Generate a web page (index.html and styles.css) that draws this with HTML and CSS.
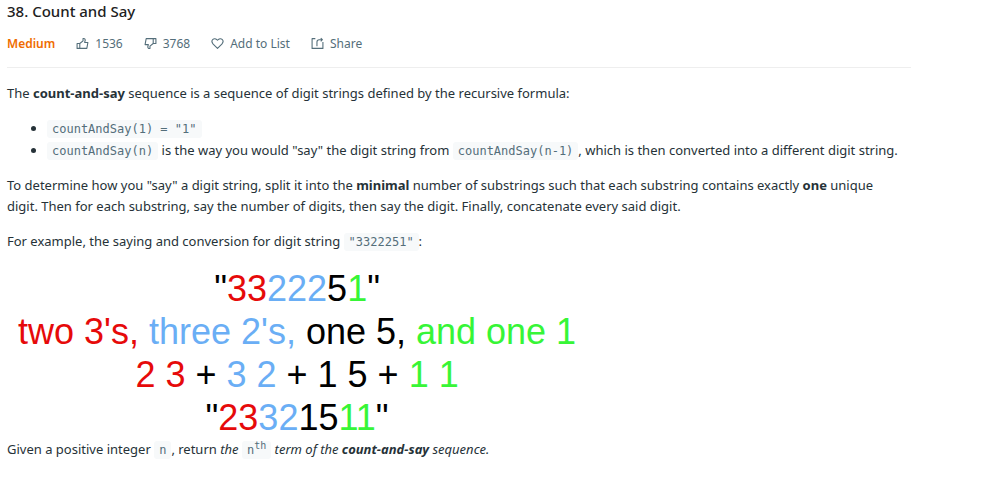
FILE: index.html
```html
<!DOCTYPE html>
<html lang="en">
<head>
<meta charset="utf-8">
<meta name="viewport" content="width=device-width, initial-scale=1">
<title>Count and Say</title>
<link rel="stylesheet" href="styles.css">
</head>
<body>
<main class="problem">
  <header class="head">
    <h1 class="title">38. Count and Say</h1>
    <div class="meta">
      <span class="difficulty">Medium</span>
      <button class="action" type="button"><svg class="icon" viewBox="0 0 24 24" aria-hidden="true"><path d="M2 12h5v9H2zM7 12l6-5V3c3-1 4 1 4 3l-1 4h6l-2 11H7"/></svg>1536</button>
      <button class="action" type="button"><svg class="icon" viewBox="0 0 24 24" aria-hidden="true"><path d="M22 12h-5V3h5zM17 12l-6 5v4c-3 1-4-1-4-3l1-4H2L4 3h13"/></svg>3768</button>
      <button class="action" type="button"><svg class="icon" viewBox="0 0 24 24" aria-hidden="true"><path d="M12 21 4 13C-2 6 6-1 12 6c6-7 14 0 8 7z"/></svg>Add to List</button>
      <button class="action" type="button"><svg class="icon" viewBox="0 0 24 24" aria-hidden="true"><path d="M8 3H2v18h20V9M11 17V9c0-3 1-4 4-4h6M18 2l3 3-3 3"/></svg>Share</button>
    </div>
  </header>
  <div class="content">
    <p>The <strong>count-and-say</strong> sequence is a sequence of digit strings defined by the recursive formula:</p>
    <ul>
      <li><code>countAndSay(1) = "1"</code></li>
      <li><code>countAndSay(n)</code> is the way you would "say" the digit string from <code>countAndSay(n-1)</code>, which is then converted into a different digit string.</li>
    </ul>
    <p>To determine how you "say" a digit string, split it into the <strong>minimal</strong> number of substrings such that each substring contains exactly <strong>one</strong> unique digit. Then for each substring, say the number of digits, then say the digit. Finally, concatenate every said digit.</p>
    <p>For example, the saying and conversion for digit string <code>"3322251"</code>:</p>
    <figure class="figure">
      <div>"<span class="red">33</span><span class="blue">222</span>5<span class="green">1</span>"</div>
      <div><span class="red">two 3's,</span> <span class="blue">three 2's,</span> one 5, <span class="green">and one 1</span></div>
      <div><span class="red">2 3</span> + <span class="blue">3 2</span> + 1 5 + <span class="green">1 1</span></div>
      <div>"<span class="red">23</span><span class="blue">32</span>15<span class="green">11</span>"</div>
    </figure>
    <p>Given a positive integer <code>n</code>, return <em>the <code>n<sup>th</sup></code> term of the <strong>count-and-say</strong> sequence.</em></p>
  </div>
</main>
</body>
</html>
```
FILE: styles.css
```css
* { box-sizing: border-box; }

body {
  margin: 0;
  background: #fff;
  color: #263238;
  font: 13px/21px "Noto Sans", "Open Sans", sans-serif;
}

.problem { padding: 0 77px 24px 7px; }

.head {
  padding-bottom: 13px;
  border-bottom: 1px solid #eee;
}

.title {
  margin: 0;
  color: #212121;
  font-size: 15px;
  font-weight: 500;
  line-height: 22px;
}

.meta {
  display: flex;
  align-items: center;
  gap: 21px;
  margin-top: 11px;
  font-size: 12px;
}

.difficulty {
  color: #ef6c00;
  font-weight: 600;
}

.action {
  display: flex;
  align-items: center;
  gap: 6px;
  padding: 0;
  border: 0;
  background: none;
  color: #546e7a;
  font: inherit;
}

.icon {
  width: 13px;
  height: 13px;
  fill: none;
  stroke: currentColor;
  stroke-width: 2;
  stroke-linejoin: round;
}

.content { padding: 15px 10px 0 0; }

p { margin: 0 0 14px; }

ul {
  margin: -1px 0 14px;
  padding-left: 40px;
}

li { line-height: 22px; }

code {
  padding: 2px 5px;
  border-radius: 3px;
  background: #f7f9fa;
  color: #546e7a;
  font: 12px/1 "DejaVu Sans Mono", monospace;
}

sup {
  font-size: 10px;
  line-height: 0;
}

.figure {
  width: fit-content;
  margin: 15px 0 0 11px;
  color: #000;
  font: 36px/43px "Liberation Sans", Arial, sans-serif;
  text-align: center;
}

.red { color: #e60a0a; }
.blue { color: #6aaef5; }
.green { color: #37f537; }
```
